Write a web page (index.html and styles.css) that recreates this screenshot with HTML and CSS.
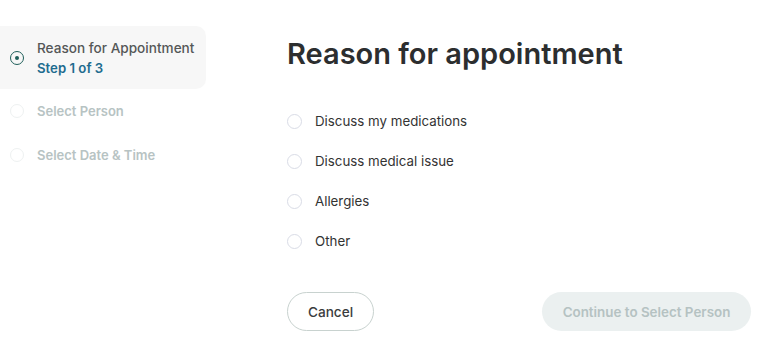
FILE: index.html
```html
<!DOCTYPE html>
<html>
<head>
<meta charset="utf-8">
<link rel="stylesheet" href="styles.css">
</head>
<body>
<div class="page">
  <aside class="steps">
    <div class="step active">
      <span class="dot"></span>
      <div class="step-text">
        <div class="step-title">Reason for Appointment</div>
        <div class="step-sub">Step 1 of 3</div>
      </div>
    </div>
    <div class="step">
      <span class="dot"></span>
      <div class="step-text"><div class="step-title">Select Person</div></div>
    </div>
    <div class="step">
      <span class="dot"></span>
      <div class="step-text"><div class="step-title">Select Date &amp; Time</div></div>
    </div>
  </aside>
  <main class="main">
    <h1 class="title">Reason for appointment</h1>
    <ul class="options">
      <li class="option"><span class="radio"></span>Discuss my medications</li>
      <li class="option"><span class="radio"></span>Discuss medical issue</li>
      <li class="option"><span class="radio"></span>Allergies</li>
      <li class="option"><span class="radio"></span>Other</li>
    </ul>
    <div class="actions">
      <button class="btn cancel">Cancel</button>
      <button class="btn continue">Continue to Select Person</button>
    </div>
  </main>
</div>
</body>
</html>
```
FILE: styles.css
```css
* { box-sizing: border-box; }
html, body { margin: 0; padding: 0; background: #fff; }
body {
  font-family: Inter, "Noto Sans", sans-serif;
  color: #333;
  width: 770px;
  height: 362px;
  overflow: hidden;
}
.page {
  display: flex;
  padding-top: 26px;
}
.steps {
  width: 206px;
  flex: none;
  display: flex;
  flex-direction: column;
}
.step {
  display: flex;
  align-items: center;
  gap: 13px;
  padding: 0 10px;
  height: 44px;
}
.step.active {
  background: #f7f7f7;
  border-radius: 0 10px 10px 0;
  height: 63px;
}
.dot {
  width: 14px;
  height: 14px;
  border-radius: 50%;
  border: 1.5px solid #eef1f1;
  flex: none;
  display: flex;
  align-items: center;
  justify-content: center;
}
.step.active .dot { border: 1.8px solid #1f5f5a; }
.step.active .dot::after {
  content: "";
  width: 4px;
  height: 4px;
  border-radius: 50%;
  background: #1f5f5a;
}
.step-title {
  font-size: 13px;
  font-weight: 600;
  color: #b7c3c3;
  line-height: 18px;
}
.step.active .step-title { color: #555758; font-weight: 500; font-size: 13.6px; }
.step-sub {
  font-size: 13.2px;
  font-weight: 600;
  color: #1e6c8f;
  line-height: 18px;
  margin-top: 2px;
}
.main {
  margin-left: 81px;
  width: 464px;
  display: flex;
  flex-direction: column;
}
.title {
  margin: 7px 0 0;
  font-size: 29px;
  font-weight: 600;
  color: #2c2e2f;
  line-height: 42px;
}
.options {
  list-style: none;
  margin: 37px 0 0;
  padding: 0;
  display: flex;
  flex-direction: column;
  gap: 22px;
}
.option {
  display: flex;
  align-items: center;
  gap: 13px;
  font-size: 13.3px;
  color: #333;
  line-height: 18px;
}
.radio {
  width: 15px;
  height: 15px;
  border-radius: 50%;
  border: 1.5px solid #d9dce6;
  flex: none;
}
.actions {
  display: flex;
  justify-content: space-between;
  margin-top: 42px;
}
.btn {
  font-family: inherit;
  height: 39px;
  border-radius: 20px;
  font-size: 13.6px;
  font-weight: 500;
  cursor: pointer;
}
.cancel {
  width: 87px;
  background: #fff;
  border: 1px solid #c8d2cf;
  color: #3a3c3d;
}
.continue {
  width: 209px;
  background: #ebf0f0;
  border: none;
  color: #b5c2c2;
  font-weight: 600;
  font-size: 13.4px;
}
```
